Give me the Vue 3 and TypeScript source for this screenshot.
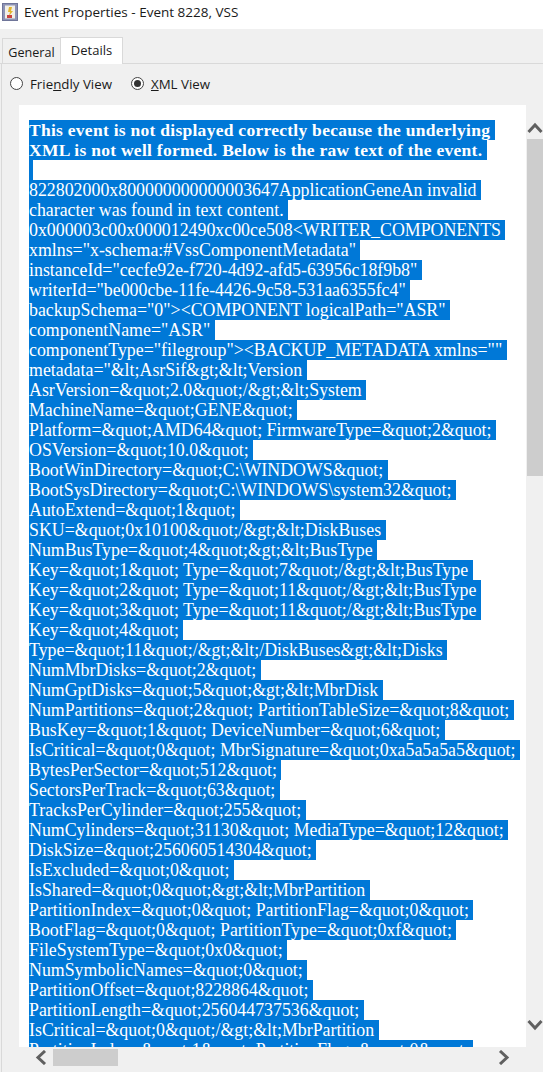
<script setup lang="ts">
const boldLines: string[] = [
  'This event is not displayed correctly because the underlying ',
  'XML is not well formed. Below is the raw text of the event. ',
]
const lines: string[] = [
  ' ',
  '822802000x800000000000003647ApplicationGeneAn invalid ',
  'character was found in text content. ',
  '0x000003c00x000012490xc00ce508<WRITER_COMPONENTS ',
  'xmlns="x-schema:#VssComponentMetadata" ',
  'instanceId="cecfe92e-f720-4d92-afd5-63956c18f9b8" ',
  'writerId="be000cbe-11fe-4426-9c58-531aa6355fc4" ',
  'backupSchema="0"><COMPONENT logicalPath="ASR" ',
  'componentName="ASR" ',
  'componentType="filegroup"><BACKUP_METADATA xmlns="" ',
  'metadata="&lt;AsrSif&gt;&lt;Version ',
  'AsrVersion=&quot;2.0&quot;/&gt;&lt;System ',
  'MachineName=&quot;GENE&quot; ',
  'Platform=&quot;AMD64&quot; FirmwareType=&quot;2&quot; ',
  'OSVersion=&quot;10.0&quot; ',
  'BootWinDirectory=&quot;C:\\WINDOWS&quot; ',
  'BootSysDirectory=&quot;C:\\WINDOWS\\system32&quot; ',
  'AutoExtend=&quot;1&quot; ',
  'SKU=&quot;0x10100&quot;/&gt;&lt;DiskBuses ',
  'NumBusType=&quot;4&quot;&gt;&lt;BusType ',
  'Key=&quot;1&quot; Type=&quot;7&quot;/&gt;&lt;BusType ',
  'Key=&quot;2&quot; Type=&quot;11&quot;/&gt;&lt;BusType ',
  'Key=&quot;3&quot; Type=&quot;11&quot;/&gt;&lt;BusType ',
  'Key=&quot;4&quot; ',
  'Type=&quot;11&quot;/&gt;&lt;/DiskBuses&gt;&lt;Disks ',
  'NumMbrDisks=&quot;2&quot; ',
  'NumGptDisks=&quot;5&quot;&gt;&lt;MbrDisk ',
  'NumPartitions=&quot;2&quot; PartitionTableSize=&quot;8&quot; ',
  'BusKey=&quot;1&quot; DeviceNumber=&quot;6&quot; ',
  'IsCritical=&quot;0&quot; MbrSignature=&quot;0xa5a5a5a5&quot; ',
  'BytesPerSector=&quot;512&quot; ',
  'SectorsPerTrack=&quot;63&quot; ',
  'TracksPerCylinder=&quot;255&quot; ',
  'NumCylinders=&quot;31130&quot; MediaType=&quot;12&quot; ',
  'DiskSize=&quot;256060514304&quot; ',
  'IsExcluded=&quot;0&quot; ',
  'IsShared=&quot;0&quot;&gt;&lt;MbrPartition ',
  'PartitionIndex=&quot;0&quot; PartitionFlag=&quot;0&quot; ',
  'BootFlag=&quot;0&quot; PartitionType=&quot;0xf&quot; ',
  'FileSystemType=&quot;0x0&quot; ',
  'NumSymbolicNames=&quot;0&quot; ',
  'PartitionOffset=&quot;8228864&quot; ',
  'PartitionLength=&quot;256044737536&quot; ',
  'IsCritical=&quot;0&quot;/&gt;&lt;MbrPartition ',
  'PartitionIndex=&quot;1&quot; PartitionFlag=&quot;0&quot; ',
]
</script>

<template>
  <div class="window">
    <header class="titlebar">
      <svg class="app-icon" width="17" height="18" viewBox="0 0 17 18" aria-hidden="true">
        <rect x="0.5" y="0.5" width="15" height="17" fill="#8d93b5" stroke="#6f7599" />
        <rect x="3" y="2.5" width="10" height="13" fill="#f2efe6" />
        <path d="M7 4h3l-1 4h2l-4 5 1-4H6z" fill="#e3b52c" />
        <rect x="5" y="12" width="5" height="3" fill="#c9433f" />
      </svg>
      <span class="title">Event Properties - Event 8228, VSS</span>
    </header>

    <nav class="tabs">
      <div class="tab">General</div>
      <div class="tab active">Details</div>
    </nav>

    <main class="panel">
      <div class="views">
        <label class="radio">
          <span class="dot"></span>
          <span>Frie<u>n</u>dly View</span>
        </label>
        <label class="radio">
          <span class="dot checked"></span>
          <span><u>X</u>ML View</span>
        </label>
      </div>

      <div class="viewer-row">
        <div class="viewer">
          <div class="doc">
            <div v-for="(l, i) in boldLines" :key="'b' + i" class="line bold"><span>{{ l }}</span></div>
            <div v-for="(l, i) in lines" :key="i" class="line"><span>{{ l }}</span></div>
          </div>
        </div>
        <aside class="vscroll">
          <svg class="v-arrow" width="16" height="12" viewBox="0 0 16 12" aria-hidden="true">
            <path d="M1.5 10 8 3l6.500 7" fill="none" stroke="#606060" stroke-width="3" />
          </svg>
          <div class="v-thumb"></div>
          <svg class="v-arrow down" width="16" height="12" viewBox="0 0 16 12" aria-hidden="true">
            <path d="M1.500 2 8 9l6.500-7" fill="none" stroke="#606060" stroke-width="3" />
          </svg>
        </aside>
      </div>

      <div class="hscroll">
        <svg width="12" height="15" viewBox="0 0 12 15" aria-hidden="true">
          <path d="M10 1 3 7.500l7 6.500" fill="none" stroke="#606060" stroke-width="3" />
        </svg>
        <div class="h-thumb"></div>
        <svg class="h-next" width="12" height="15" viewBox="0 0 12 15" aria-hidden="true">
          <path d="M2 1l7 6.500L2 14" fill="none" stroke="#606060" stroke-width="3" />
        </svg>
      </div>
    </main>
  </div>
</template>

<style>
html,
body {
  margin: 0;
  background: #f0f0f0;
  overflow: hidden;
}
</style>

<style scoped>
.window {
  width: 543px;
  height: 1072px;
  overflow: hidden;
  background: #f0f0f0;
  display: flex;
  flex-direction: column;
  font-family: "Open Sans", "Noto Sans", sans-serif;
  color: #1a1a1a;
}
.titlebar {
  height: 29px;
  flex: none;
  background: #fff;
  display: flex;
  align-items: flex-start;
  padding: 3px 0 0 2px;
  box-sizing: border-box;
}
.app-icon {
  flex: none;
}
.title {
  margin-left: 5px;
  font-size: 13.5px;
  line-height: 19px;
  white-space: nowrap;
}
.tabs {
  height: 35px;
  flex: none;
  box-sizing: border-box;
  display: flex;
  align-items: flex-end;
  padding: 0 0 0 2px;
  border-bottom: 1px solid #d9d9d9;
}
.tab {
  height: 25px;
  width: 59px;
  box-sizing: border-box;
  border: 1px solid #d9d9d9;
  border-bottom: none;
  text-align: center;
  font-size: 12.6px;
  line-height: 27px;
}
.tab.active {
  position: relative;
  width: 63px;
  height: 27px;
  margin-bottom: -1px;
  margin-left: -1px;
  background: #fff;
  font-size: 13px;
  line-height: 25px;
}
.panel {
  flex: 1;
  min-height: 0;
  display: flex;
  flex-direction: column;
  margin-left: 1px;
  border-left: 1px solid #d9d9d9;
}
.views {
  height: 41px;
  padding-bottom: 2px;
  box-sizing: border-box;
  flex: none;
  display: flex;
  gap: 19px;
  align-items: center;
  padding-left: 8px;
  font-size: 13.3px;
}
.radio {
  display: flex;
  align-items: center;
  gap: 7px;
}
.dot {
  width: 11px;
  height: 11px;
  border: 1px solid #444;
  border-radius: 50%;
  background: #fff;
  box-sizing: content-box;
  position: relative;
}
.dot.checked::after {
  content: "";
  position: absolute;
  inset: 2px;
  border-radius: 50%;
  background: #333;
}
.viewer-row {
  height: 942px;
  flex: none;
  display: flex;
  padding-left: 17px;
}
.viewer {
  width: 507px;
  background: #fff;
  overflow: hidden;
  box-sizing: border-box;
  padding: 15px 0 0 10px;
}
.doc {
  font-family: "Liberation Serif", "Times New Roman", serif;
  font-size: 17.85px;
  line-height: 20px;
  color: #fff;
}
.line {
  height: 20px;
  white-space: pre;
}
.line span {
  display: inline-block;
  height: 20px;
  background: #0078d7;
}
.bold {
  font-weight: 700;
  font-size: 17.5px;
  letter-spacing: 0.27px;
}
.vscroll {
  margin-left: 1px;
  width: 16px;
  position: relative;
  display: flex;
  flex-direction: column;
}
.v-arrow {
  margin-top: 17px;
  flex: none;
}
.v-arrow.down {
  margin-top: auto;
  margin-bottom: 16px;
}
.v-thumb {
  margin-top: 5px;
  height: 337px;
  background: #cdcdcd;
  flex: none;
}
.hscroll {
  height: 18px;
  margin-top: 1px;
  flex: none;
  display: flex;
  align-items: center;
  padding-left: 33px;
}
.h-thumb {
  width: 65px;
  height: 17px;
  margin-left: 6px;
  background: #cdcdcd;
}
.h-next {
  margin-left: 380px;
}
</style>
